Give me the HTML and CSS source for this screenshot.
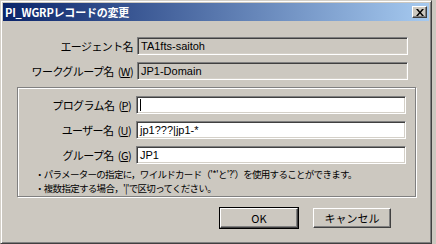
FILE: index.html
```html
<!DOCTYPE html>
<html lang="ja">

<head>
  <meta charset="UTF-8">
  <title>PI_WGRPレコードの変更</title>
  <link rel="stylesheet" href="styles.css">
</head>

<body>
  <div class="window">
    <div class="titlebar">
      <span class="title">PI_WGRPレコードの変更</span>
      <button class="close-btn">
        <svg width="8" height="7" viewBox="0 0 8 7">
          <path d="M0 0h2l2 2.5 2-2.5h2l-3 3.5 3 3.5h-2l-2-2.5-2 2.5h-2l3-3.5z" fill="#000" />
        </svg>
      </button>
    </div>

    <div class="dialog-body">
      <div class="form-row">
        <span class="form-label">エージェント名</span>
        <div class="field readonly">TA1fts-saitoh</div>
      </div>
      <div class="form-row">
        <span class="form-label">ワークグループ名<span class="key">(<u>W</u>)</span></span>
        <div class="field readonly">JP1-Domain</div>
      </div>

      <div class="group-box">
        <div class="form-row">
          <span class="form-label">プログラム名<span class="key">(<u>P</u>)</span></span>
          <div class="field"><span class="caret"></span></div>
        </div>
        <div class="form-row">
          <span class="form-label">ユーザー名<span class="key">(<u>U</u>)</span></span>
          <div class="field">jp1???|jp1-*</div>
        </div>
        <div class="form-row">
          <span class="form-label">グループ名<span class="key">(<u>G</u>)</span></span>
          <div class="field">JP1</div>
        </div>
        <div class="notes">
          <p>・パラメーターの指定に，ワイルドカード（'*'と'?'）を使用することができます。</p>
          <p>・複数指定する場合，'|'で区切ってください。</p>
        </div>
      </div>

      <div class="btn-row">
        <button class="btn btn-default">OK</button>
        <button class="btn">キャンセル</button>
      </div>
    </div>
  </div>
</body>

</html>
```

FILE: styles.css
```css
* {
  margin: 0;
  padding: 0;
  box-sizing: border-box;
}

body {
  font-family: "Noto Sans CJK JP", "Liberation Sans", sans-serif;
  font-size: 11px;
  color: #000;
  background-color: #ccc8c0;
}

.window {
  width: 432px;
  height: 244px;
  background-color: #ccc8c0;
  border: 1px solid;
  border-color: #d4d0c8 #404040 #404040 #d4d0c8;
  box-shadow: inset 1px 1px #fff, inset -1px -1px #808080;
  padding: 2px;
}

/* タイトルバー */
.titlebar {
  height: 18px;
  display: flex;
  align-items: center;
  justify-content: space-between;
  padding: 0 2px 0 2px;
  background: linear-gradient(to right, #0a246a, #a6caf0);
}

.title {
  color: #fff;
  font-weight: bold;
  font-size: 11px;
  letter-spacing: -0.2px;
}

.close-btn {
  width: 15px;
  height: 12px;
  display: flex;
  align-items: center;
  justify-content: center;
  background-color: #ccc8c0;
  border: 1px solid;
  border-color: #fff #404040 #404040 #fff;
  box-shadow: inset -1px -1px #808080;
}

.dialog-body {
  padding-top: 16px;
}

.form-row {
  display: flex;
  align-items: center;
  height: 18px;
  margin-bottom: 7px;
}

.form-label {
  width: 130px;
  text-align: right;
  margin-right: 4px;
  white-space: nowrap;
  letter-spacing: -0.6px;
}

.key {
  margin-left: 4px;
}

.field {
  width: 271px;
  height: 18px;
  display: flex;
  align-items: center;
  padding-left: 3px;
  background-color: #fff;
  border: 1px solid;
  border-color: #808080 #fff #fff #808080;
  box-shadow: inset 1px 1px #404040, inset -1px -1px #d4d0c8;
  font-family: "Liberation Sans", sans-serif;
  font-size: 11px;
}

.field.readonly {
  background-color: #ccc8c0;
}

.caret {
  display: block;
  width: 1px;
  height: 12px;
  background-color: #000;
}

/* グループボックス */
.group-box {
  width: 399px;
  margin: 1px 0 0 14px;
  padding: 8px 7px 1px 0;
  border: 1px solid #808080;
  box-shadow: inset 1px 1px #fff, 1px 1px #fff;
}

.group-box .form-label {
  width: 113px;
  margin-right: 5px;
}

.group-box .field {
  width: 270px;
}

.notes {
  padding-left: 17px;
  margin-top: -4px;
  font-size: 9.5px;
  line-height: 14px;
  letter-spacing: -0.7px;
}

.btn-row {
  display: flex;
  justify-content: flex-end;
  gap: 15px;
  padding-right: 38px;
  margin-top: 11px;
}

.btn {
  width: 78px;
  height: 20px;
  background-color: #ccc8c0;
  border: 1px solid;
  border-color: #fff #404040 #404040 #fff;
  box-shadow: inset -1px -1px #808080;
  font-family: inherit;
  font-size: 11px;
  color: #000;
}

.btn-default {
  outline: 1px solid #000;
}
```
